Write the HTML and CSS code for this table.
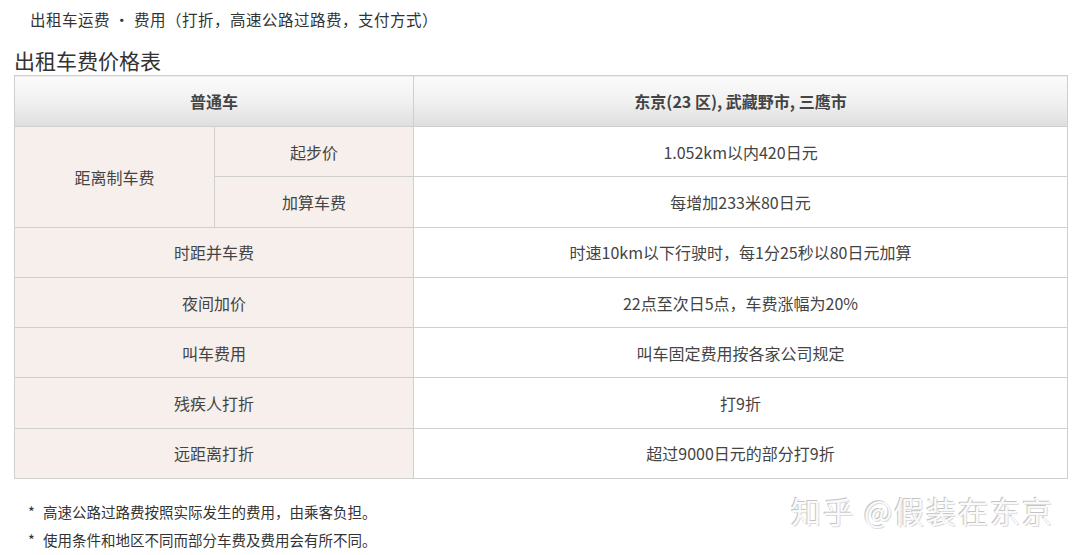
FILE: index.html
```html
<!DOCTYPE html>
<html lang="zh-CN">
<head>
<meta charset="utf-8">
<link rel="stylesheet" href="styles.css">
</head>
<body>
<div class="page">
  <p class="crumb">出租车运费 · 费用（打折，高速公路过路费，支付方式）</p>
  <h2 class="title">出租车费价格表</h2>
  <table class="fare">
    <colgroup>
      <col class="c1"><col class="c2"><col class="c3">
    </colgroup>
    <thead>
      <tr><th colspan="2">普通车</th><th>东京(23 区), 武藏野市, 三鹰市</th></tr>
    </thead>
    <tbody>
      <tr><td class="lab" rowspan="2">距离制车费</td><td class="lab">起步价</td><td>1.052km以内420日元</td></tr>
      <tr><td class="lab">加算车费</td><td>每增加233米80日元</td></tr>
      <tr><td class="lab" colspan="2">时距并车费</td><td>时速10km以下行驶时，每1分25秒以80日元加算</td></tr>
      <tr><td class="lab" colspan="2">夜间加价</td><td>22点至次日5点，车费涨幅为20%</td></tr>
      <tr><td class="lab" colspan="2">叫车费用</td><td>叫车固定费用按各家公司规定</td></tr>
      <tr><td class="lab" colspan="2">残疾人打折</td><td>打9折</td></tr>
      <tr><td class="lab" colspan="2">远距离打折</td><td>超过9000日元的部分打9折</td></tr>
    </tbody>
  </table>
  <ul class="notes">
    <li><span class="star">*</span>高速公路过路费按照实际发生的费用，由乘客负担。</li>
    <li><span class="star">*</span>使用条件和地区不同而部分车费及费用会有所不同。</li>
  </ul>
  <div class="watermark">知乎 @假装在东京</div>
</div>
</body>
</html>
```
FILE: styles.css
```css
html, body {
  margin: 0;
  padding: 0;
  background: #ffffff;
}
body {
  font-family: "Noto Sans CJK SC", "Noto Sans", sans-serif;
  color: #444;
}
.page {
  position: relative;
  width: 1080px;
  height: 555px;
  overflow: hidden;
  padding: 0 12px 0 14px;
  box-sizing: border-box;
}
.crumb {
  margin: 0;
  padding: 8px 0 0 16px;
  font-size: 15.5px;
  line-height: 22px;
  letter-spacing: 0.5px;
  color: #333;
}
.title {
  margin: 0;
  padding-top: 17px;
  font-size: 21px;
  line-height: 26px;
  font-weight: normal;
  color: #333;
}
.fare {
  margin-top: 2px;
  width: 1054px;
  border-collapse: collapse;
  table-layout: fixed;
  font-size: 16px;
  color: #444;
}
.fare .c1 { width: 200px; }
.fare .c2 { width: 199px; }
.fare .c3 { width: auto; }
.fare th, .fare td {
  border: 1px solid #cfcfcf;
  text-align: center;
  padding: 0;
}
.fare th {
  height: 50px;
  font-weight: bold;
  color: #444;
  background: linear-gradient(#fbfbfb 0%, #f1f1f1 50%, #dedede 100%);
}
.fare td {
  height: 49.3px;
  background: #ffffff;
}
.fare td.lab {
  background: #f7efeb;
}
.notes {
  list-style: none;
  margin: 0;
  padding: 19px 0 0 14px;
  font-size: 14.5px;
  line-height: 28px;
  color: #333;
}
.star {
  display: inline-block;
  width: 15px;
}
.watermark {
  position: absolute;
  left: 791px;
  top: 491px;
  font-size: 30px;
  line-height: 38px;
  letter-spacing: 2px;
  color: #fafafa;
  text-shadow: -1px -1px 0 #c4c4c4, 1px 1px 0 #dcdcdc;
}
```
